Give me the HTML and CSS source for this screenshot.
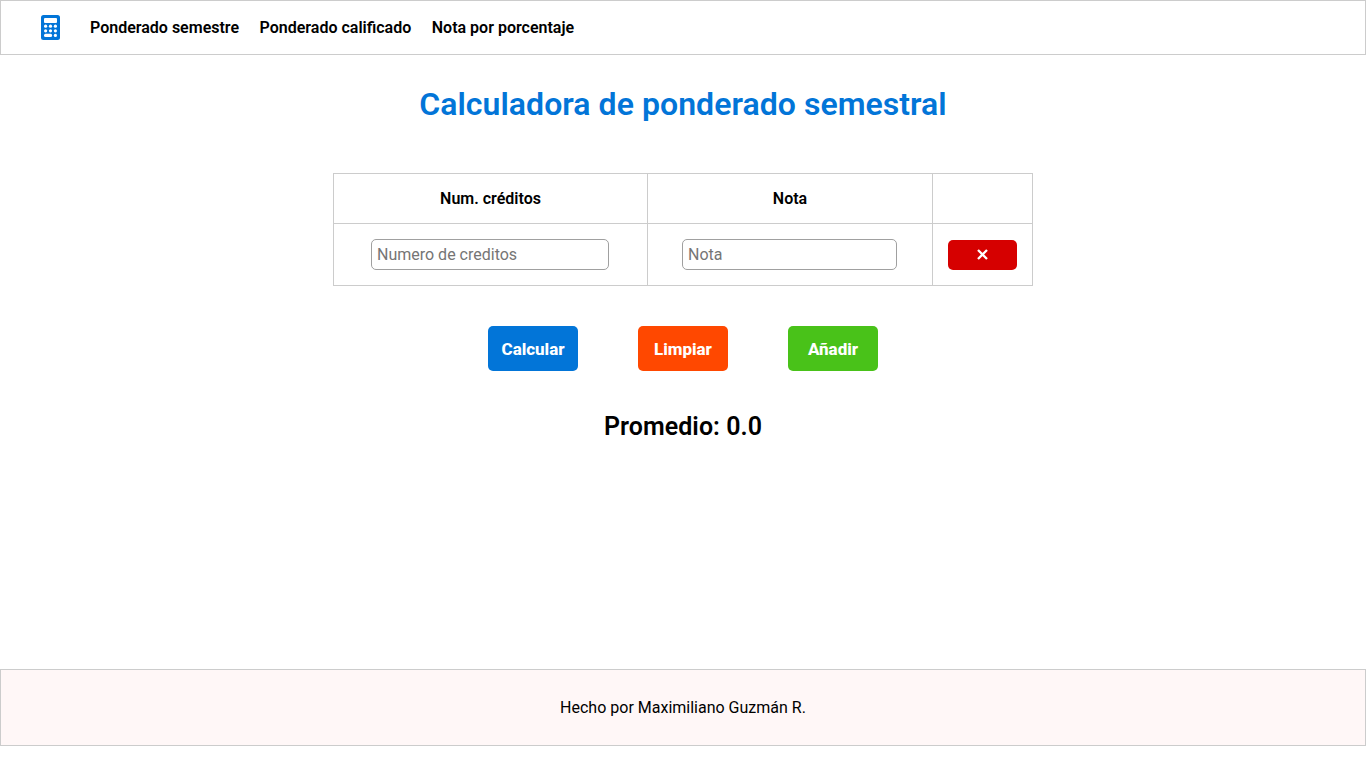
FILE: index.html
```html
<!DOCTYPE html>
<html lang="es">
<head>
<meta charset="utf-8">
<title>Calculadora de ponderado semestral</title>
<link rel="stylesheet" href="styles.css">
</head>
<body>
<nav class="navbar">
  <svg class="logo" width="19" height="25" viewBox="0 0 19 25"><rect width="19" height="25" rx="2.5" fill="#0275d8"/><g fill="#fff"><rect x="3" y="3" width="13" height="5" rx="1"/><circle cx="4.6" cy="11.2" r="1.6"/><circle cx="9.5" cy="11.2" r="1.6"/><circle cx="14.4" cy="11.2" r="1.6"/><circle cx="4.6" cy="15.8" r="1.6"/><circle cx="9.5" cy="15.8" r="1.6"/><circle cx="14.4" cy="15.8" r="1.6"/><rect x="3" y="18.8" width="8.1" height="3.1" rx="1.5"/><circle cx="14.4" cy="20.4" r="1.6"/></g></svg>
  <a class="link">Ponderado semestre</a>
  <a class="link">Ponderado calificado</a>
  <a class="link">Nota por porcentaje</a>
</nav>
<main class="content">
  <h1 class="title">Calculadora de ponderado semestral</h1>
  <table class="grades">
    <tr><th class="credits">Num. créditos</th><th class="grade">Nota</th><th class="action"></th></tr>
    <tr><td><input class="field credits-field" placeholder="Numero de creditos"></td><td><input class="field grade-field" placeholder="Nota"></td><td><button class="remove" aria-label="Eliminar"><svg width="11" height="11" viewBox="0 0 11 11"><path d="M1 1L10 10M10 1L1 10" stroke="#fff" stroke-width="2.3"/></svg></button></td></tr>
  </table>
  <div class="actions">
    <button class="btn calculate">Calcular</button>
    <button class="btn clear">Limpiar</button>
    <button class="btn add">Añadir</button>
  </div>
  <h2 class="result">Promedio: 0.0</h2>
</main>
<footer class="footer">Hecho por Maximiliano Guzmán R.</footer>
</body>
</html>
```
FILE: styles.css
```css
* { box-sizing: border-box; }
body { margin: 0; font-family: Roboto, sans-serif; font-size: 16px; color: #000; background: #fff; }
.navbar { display: flex; align-items: center; height: 55px; border: 1px solid #ccc; padding-left: 40px; gap: 20.5px; }
.logo { margin-right: 9.5px; }
.link { font-weight: 600; }
.content { display: flex; flex-direction: column; align-items: center; height: 614px; }
.title { margin: 30px 0 50px; font-size: 32px; line-height: 38px; font-weight: 600; letter-spacing: 0.05px; color: #0275d8; }
.grades { width: 700px; border-collapse: collapse; table-layout: fixed; }
.grades th, .grades td { border: 1px solid #ccc; padding: 0; text-align: center; font-weight: 600; }
.grades th { height: 50px; }
.grades td { height: 62px; }
.credits { width: 314px; }
.grade { width: 285px; }
.action { width: 100px; }
.field { height: 31px; margin-right: 1px; border: 1px solid #a0a0a0; border-radius: 5px; padding: 5px; font: 400 16px Roboto, sans-serif; vertical-align: middle; }
.credits-field { width: 238px; }
.grade-field { width: 215px; }
.remove { display: flex; align-items: center; justify-content: center; width: 69px; height: 30px; margin: 0 auto; padding: 0; border: 0; border-radius: 5px; background: #d60000; }
.actions { display: flex; gap: 60px; margin-top: 40px; }
.btn { width: 90px; height: 45px; padding: 1px 0 0; border: 0; border-radius: 5px; color: #fff; font: 800 17px Roboto, sans-serif; letter-spacing: -0.03px; }
.calculate { background: #0275d8; }
.clear { background: #ff4800; }
.add { background: #49c219; }
.result { margin: 41px 0 0; font-size: 25px; line-height: 30px; font-weight: 600; letter-spacing: 0.05px; }
.footer { display: flex; align-items: center; justify-content: center; height: 77px; border: 1px solid #ccc; background: #fff7f7; font-weight: 370; }
```
